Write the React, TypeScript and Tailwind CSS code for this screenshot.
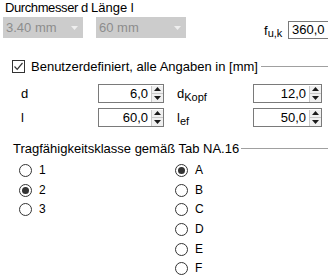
import React, { useState } from 'react';

// little up/down spinner at the right of a number box
const Spinner = () => (
  <div className="flex flex-col w-[12px] h-[16px] border-l border-[#c8c8c8] bg-[#f0f0f0]">
    <div className="flex-1 flex items-center justify-center border-b border-[#c8c8c8]">
      <svg width="7" height="4" viewBox="0 0 7 4"><path d="M0 4 L3.5 0 L7 4 Z" fill="#1a1a1a" /></svg>
    </div>
    <div className="flex-1 flex items-center justify-center">
      <svg width="7" height="4" viewBox="0 0 7 4"><path d="M0 0 L3.5 4 L7 0 Z" fill="#1a1a1a" /></svg>
    </div>
  </div>
);

const NumBox = ({ value, width }: { value: string; width: string }) => (
  <div className={`flex items-center h-[19px] border border-[#7a7a7a] bg-white ${width}`}>
    <span className="flex-1 text-right pr-[3px] leading-[15px]">{value}</span>
    <Spinner />
  </div>
);

const Select = ({ value, width }: { value: string; width: string }) => (
  <div className={`flex items-center h-[21px] bg-[#cccccc] text-[#8c8c8c] pl-[3px] pr-[5px] ${width}`}>
    <span className="flex-1 whitespace-nowrap">{value}</span>
    <svg width="7" height="4" viewBox="0 0 7 4"><path d="M0 0 L3.5 4 L7 0 Z" fill="#eeeeee" /></svg>
  </div>
);

const Radio = ({ label, checked, onClick }: { label: string; checked: boolean; onClick: () => void }) => (
  <div className="flex items-center h-[19.6px] cursor-default" onClick={onClick}>
    <span className="flex items-center justify-center w-[13px] h-[13px] rounded-full border border-[#333333] bg-white">
      {checked && <span className="w-[7px] h-[7px] rounded-full bg-[#333333]" />}
    </span>
    <span className="ml-[7px] text-[12px]">{label}</span>
  </div>
);

export default function App() {
  const [custom, setCustom] = useState(true);
  const [left, setLeft] = useState('2');
  const [right, setRight] = useState('A');

  return (
    <div
      className="relative w-[328px] h-[277px] overflow-hidden bg-white text-black text-[13px] leading-[15px]"
      style={{ fontFamily: '"Liberation Sans", Arial, sans-serif' }}
    >
      {/* Durchmesser / Länge */}
      <div className="flex h-[15px] pl-[5px] whitespace-nowrap">
        <span className="w-[86px] tracking-[-0.4px]">Durchmesser d</span>
        <span>Länge l</span>
      </div>
      <div className="flex items-start mt-[2px] h-[22px]">
        <Select value="3.40 mm" width="ml-[3px] w-[80px] shrink-0" />
        <Select value="60 mm" width="ml-[13px] w-[90px] shrink-0" />
        <div className="flex items-center ml-[78px] mt-[4px] shrink-0">
          <span className="w-[24px] whitespace-nowrap">
            f<sub className="text-[11px]">u,k</sub>
          </span>
          <div className="h-[18px] w-[50px] shrink-0 border border-[#7a7a7a] pl-[3px] leading-[16px]">360,0</div>
        </div>
      </div>

      {/* Benutzerdefiniert */}
      <div className="flex items-center mt-[20px] h-[14px]">
        <span
          className="ml-[12px] w-[13px] h-[13px] border border-[#333333] bg-white flex items-center justify-center"
          onClick={() => setCustom(!custom)}
        >
          {custom && (
            <svg width="11" height="11" viewBox="0 0 11 11">
              <path d="M1.5 5.5 L4.2 8.3 L9.5 2" stroke="#333333" strokeWidth="1.2" fill="none" />
            </svg>
          )}
        </span>
        <span className="ml-[6px] whitespace-nowrap">Benutzerdefiniert, alle Angaben in [mm]</span>
        <span className="flex-1 h-px bg-[#a0a0a0] ml-[3px]" />
      </div>

      <div className="flex flex-col gap-[5px] mt-[11px]">
        <div className="flex items-center h-[19px]">
          <span className="w-[98px] pl-[21px]">d</span>
          <NumBox value="6,0" width="w-[66px]" />
          <span className="w-[89px] pl-[13px] whitespace-nowrap">
            d<sub className="text-[11px]">Kopf</sub>
          </span>
          <NumBox value="12,0" width="w-[69px]" />
        </div>
        <div className="flex items-center h-[19px]">
          <span className="w-[98px] pl-[21px]">l</span>
          <NumBox value="60,0" width="w-[66px]" />
          <span className="w-[89px] pl-[13px] whitespace-nowrap">
            l<sub className="text-[11px]">ef</sub>
          </span>
          <NumBox value="50,0" width="w-[69px]" />
        </div>
      </div>

      {/* Tragfähigkeitsklasse */}
      <div className="flex items-center mt-[14px] h-[15px]">
        <span className="ml-[13px] whitespace-nowrap">Tragfähigkeitsklasse gemäß Tab NA.16</span>
        <span className="flex-1 h-px bg-[#a0a0a0] ml-[2px]" />
      </div>
      <div className="flex mt-[5px]">
        <div className="w-[175px] pl-[19px] flex flex-col">
          {['1', '2', '3'].map((k) => (
            <Radio key={k} label={k} checked={left === k} onClick={() => setLeft(k)} />
          ))}
        </div>
        <div className="flex flex-col">
          {['A', 'B', 'C', 'D', 'E', 'F'].map((k) => (
            <Radio key={k} label={k} checked={right === k} onClick={() => setRight(k)} />
          ))}
        </div>
      </div>
    </div>
  );
}
